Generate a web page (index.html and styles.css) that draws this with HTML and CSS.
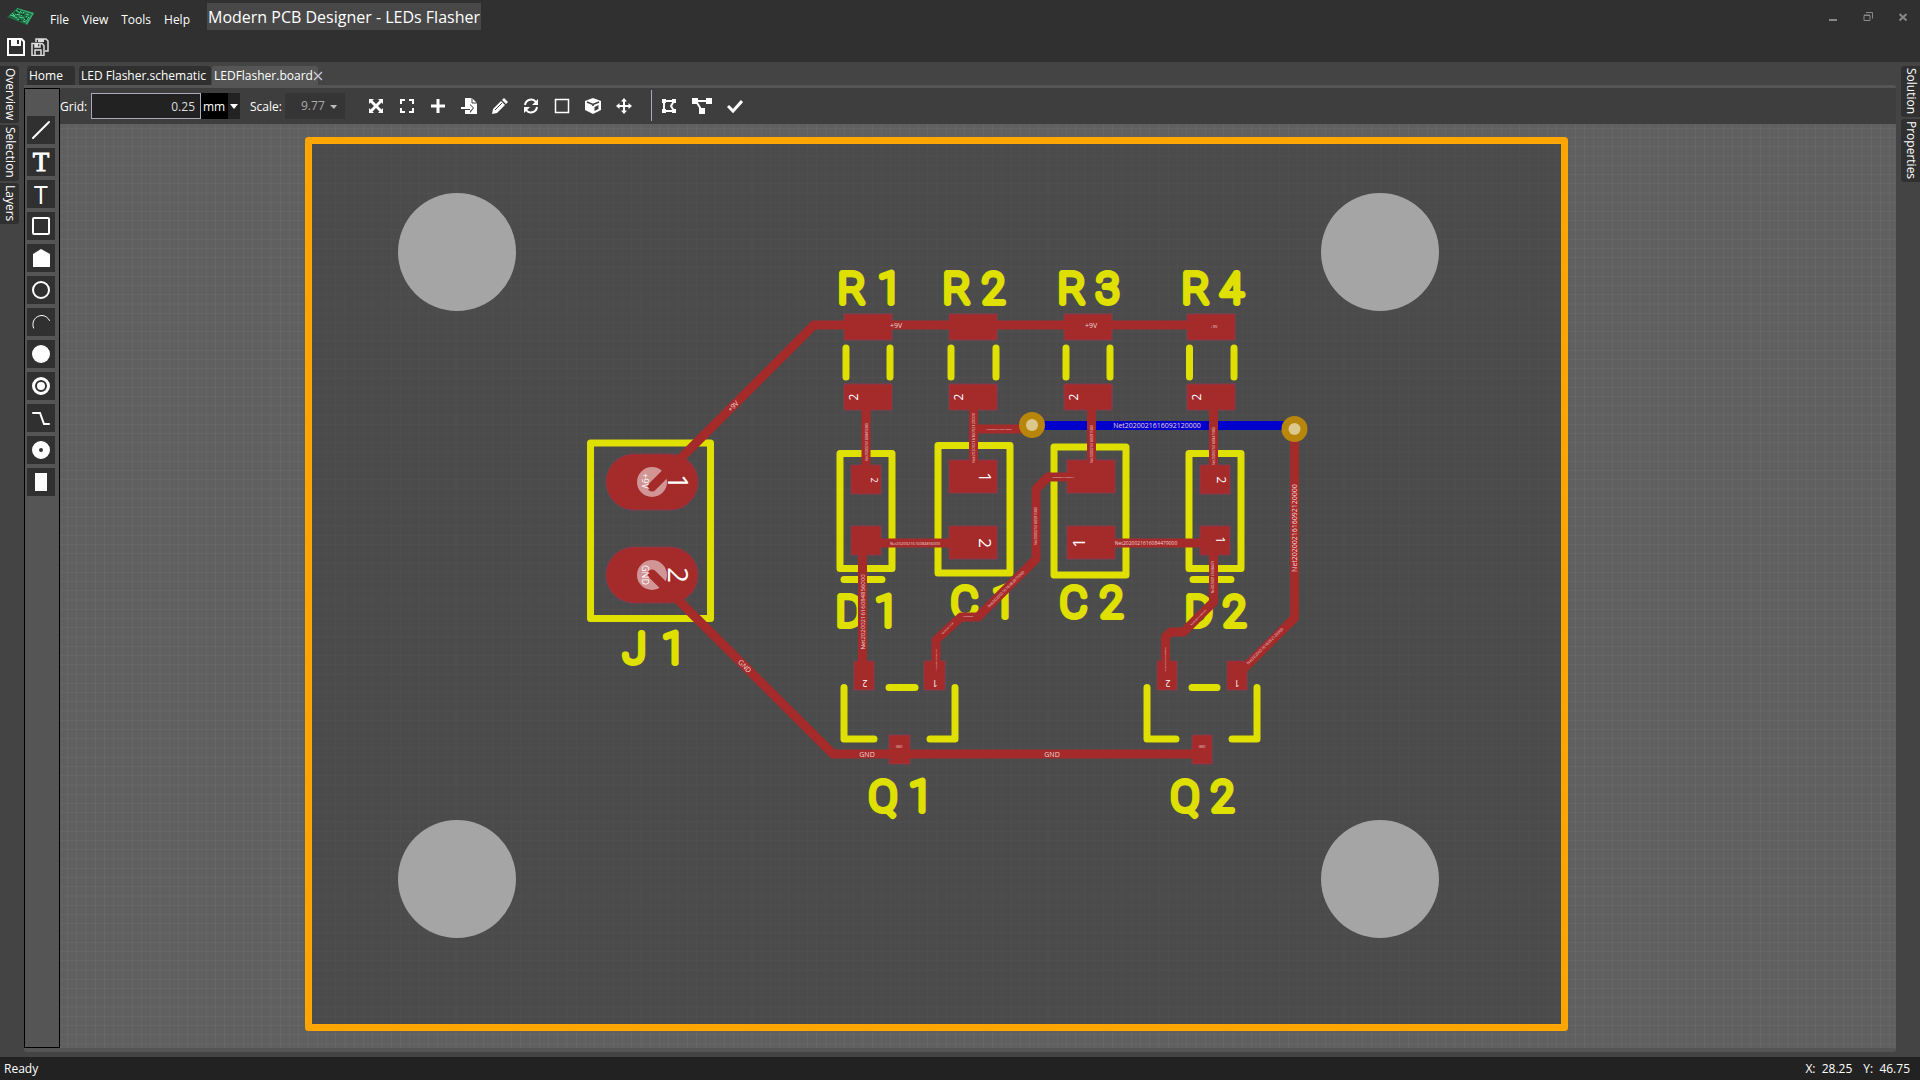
FILE: index.html
```html
<!DOCTYPE html>
<html lang="en">
<head>
<meta charset="utf-8">
<title>Modern PCB Designer - LEDs Flasher</title>
<link rel="stylesheet" href="styles.css">
</head>
<body>
<div class="app">
  <header class="titlebar">
    <div class="titlebar-row">
      <svg class="logo" viewBox="0 0 28 18" aria-hidden="true">
        <path d="M10 0 27 5 20 17 0 9Z" fill="#1f6b45"/>
        <path d="M10 0 27 5 20 17 19 15 25 6 10 1Z" fill="#35b070"/>
        <path d="M3 7l5 1M5 5l3 3M9 2l4 3M8 6l5 1M13 3l3 4M17 4l-3 4M12 9l5 1M10 11l4 2M19 6l3 1M20 8l-3 4M16 13l3 1M6 8l4 2M22 9l-3 4" stroke="#4fd08a" stroke-width="1" fill="none"/>
        <path d="M11 2l2 1M8 4l2 2M14 6l3 1M18 10l2 1M12 12l2 1" stroke="#0d3d27" stroke-width="1.5"/>
      </svg>
      <nav class="menu">
        <button>File</button><button>View</button><button>Tools</button><button>Help</button>
      </nav>
      <h1 class="title">Modern PCB Designer - LEDs Flasher</h1>
      <div class="window-buttons">
        <button aria-label="Minimize"><svg viewBox="0 0 10 10"><path d="M1 8h8" stroke-width="2"/></svg></button>
        <button aria-label="Restore"><svg viewBox="0 0 10 10"><path d="M1 3.5h6v5H1zM1 3h6M3 .5h6.500v6" /></svg></button>
        <button aria-label="Close"><svg viewBox="0 0 10 10"><path d="M1.500 2l7 6.500M8.500 2l-7 6.500" stroke-width="2"/></svg></button>
      </div>
    </div>
    <div class="quickbar">
      <button aria-label="Save"><svg viewBox="0 0 18 18"><path fill="#fff" fill-rule="evenodd" d="M0 0h15l3 3v15H0zM2 2v14h14V4l-2-2v6H4V2z"/><path fill="#fff" d="M5 1h8v6H5z"/><path fill="#303030" d="M10 2h2v4h-2z"/></svg></button>
      <button aria-label="Save all"><svg viewBox="0 0 18 18"><path fill="none" stroke="#ddd" stroke-width="1.500" d="M5 4V1h10l2 2v10h-3"/><path fill="#ddd" d="M7 1h6v3H7z"/><path fill="none" stroke="#ddd" stroke-width="1.500" d="M1 5.500h10l2 2v10H1zM4 17v-5h6v5M4 6v3h5V6"/><path fill="#ddd" d="M4 6h3v3H4z"/></svg></button>
    </div>
  </header>

  <main class="workspace">
    <aside class="dock dock-left">
      <button>Overview</button><button>Selection</button><button>Layers</button>
    </aside>

    <section class="editor">
      <div class="tabs" role="tablist">
        <button class="tab tab-home" role="tab">Home</button>
        <button class="tab tab-schematic" role="tab">LED Flasher.schematic</button>
        <button class="tab tab-board active" role="tab" aria-selected="true">LEDFlasher.board<svg viewBox="0 0 10 10"><path d="M1 1l8 8M9 1l-8 8" stroke="#ccd" stroke-width="1.300"/></svg></button>
      </div>
      <div class="document">
        <div class="tools" role="toolbar" aria-label="Drawing tools">
          <button aria-label="Line"><svg viewBox="0 0 28 28"><path class="s2" d="M6 22 22 6"/></svg></button>
          <button aria-label="Text" class="serif">T</button>
          <button aria-label="Mono text" class="sans">T</button>
          <button aria-label="Rectangle"><svg viewBox="0 0 28 28"><rect class="s2" x="6" y="6" width="16" height="16" rx="1"/></svg></button>
          <button aria-label="Polygon"><svg viewBox="0 0 28 28"><path class="f" d="M6 10l8-5 9 5v13H6z"/></svg></button>
          <button aria-label="Circle"><svg viewBox="0 0 28 28"><circle class="s2" cx="14" cy="14" r="8"/></svg></button>
          <button aria-label="Arc"><svg viewBox="0 0 28 28"><path class="s1" d="M6.500 20C4 13 9 7.500 15 7.500c3 0 6 2 7.500 5"/></svg></button>
          <button aria-label="Hole"><svg viewBox="0 0 28 28"><circle class="f" cx="14" cy="14" r="9"/></svg></button>
          <button aria-label="Via"><svg viewBox="0 0 28 28"><circle class="s3" cx="14" cy="14" r="7.500"/><circle class="f" cx="14" cy="14" r="4"/></svg></button>
          <button aria-label="Track"><svg viewBox="0 0 28 28"><path class="s2" d="M6 9h7l4 11h5"/></svg></button>
          <button aria-label="Pad"><svg viewBox="0 0 28 28"><circle cx="14" cy="14" r="5.500" fill="none" stroke="#fff" stroke-width="7"/></svg></button>
          <button aria-label="SMD pad"><svg viewBox="0 0 28 28"><path class="f" d="M8 5h12v18H8z"/></svg></button>
        </div>
        <div class="board-view">
          <div class="toolbar">
            <label for="grid">Grid:</label>
            <input id="grid" class="grid-size" type="text" value="0.25">
            <span class="unit"><select aria-label="Unit"><option>mm</option></select><svg viewBox="0 0 12 26"><path d="M2 11h8l-4 5z" fill="#fff"/></svg></span>
            <label for="scale" class="scale-label">Scale:</label>
            <span class="scale"><select id="scale"><option>9.77</option></select><svg viewBox="0 0 12 26"><path d="M2 12h7l-3 4z" fill="#bbb"/></svg></span>
            <div class="actions">
              <button aria-label="Fit"><svg viewBox="0 0 16 16"><path class="f" d="M1 1h5L4.500 2.500 8 6l3.500-3.500L10 1h5v5l-1.500-1.500L10 8l3.500 3.500L15 10v5h-5l1.500-1.500L8 10l-3.500 3.500L6 15H1v-5l1.500 1.500L6 8 2.500 4.500 1 6z"/></svg></button>
              <button aria-label="Zoom area"><svg viewBox="0 0 16 16"><path d="M2 6V2h4M10 2h4v4M14 10v4h-4M6 14H2v-4" fill="none" stroke="#fff" stroke-width="2"/></svg></button>
              <button aria-label="Add"><svg viewBox="0 0 16 16"><path d="M8 1v14M1 8h14" stroke="#fff" stroke-width="3"/></svg></button>
              <button aria-label="Import"><svg viewBox="0 0 16 16"><path class="f" d="M4 0h7l5 5v11H4v-4h5v3l4-5-4-4v3H4z"/><path class="f" d="M0 9h9V7l3 3-3 3v-2H0z"/><path d="M11 0v5h5" fill="none" stroke="#3e3e3e"/></svg></button>
              <button aria-label="Edit"><svg viewBox="0 0 16 16"><path class="f" d="M12 0l4 4-2 2-4-4zM9 3l4 4-8 8-5 1 1-5z"/><path d="M3 12l7-7" stroke="#3e3e3e"/></svg></button>
              <button aria-label="Refresh"><svg viewBox="0 0 16 16"><path d="M2 7c1-6 8-7 11-3M14 9c-1 6-8 7-11 3" fill="none" stroke="#fff" stroke-width="2"/><path class="f" d="M15 1v6H9zM1 15V9h6z"/></svg></button>
              <button aria-label="Outline"><svg viewBox="0 0 16 16"><path d="M1.500 1.500h13v13h-13z" fill="none" stroke="#fff" stroke-width="1.500"/></svg></button>
              <button aria-label="3D view"><svg viewBox="0 0 16 16"><path class="f" d="M8 0l8 3v9l-8 4-8-4V3z"/><path d="M2 4l6 2.500L14 4M8 6.500V8" fill="none" stroke="#3e3e3e" stroke-width="1.500"/><path d="M9.500 9l4-2v4l-4 2z" fill="#3e3e3e"/></svg></button>
              <button aria-label="Move"><svg viewBox="0 0 16 16"><path class="f" d="M8 0l3 3.500H9V7h3.500V5L16 8l-3.500 3V9H9v3.500h2L8 16l-3-3.500h2V9H3.500v2L0 8l3.500-3v2H7V3.500H5z"/></svg></button>
            </div>
            <div class="actions checks">
              <button aria-label="Repour polygons"><svg viewBox="0 0 16 16"><path d="M3 3h10L10 8l3 5H3z" fill="none" stroke="#fff" stroke-width="2"/><path class="f" d="M1 1h4v4H1zM11 1h4v4h-4zM1 11h4v4H1zM11 11h4v4h-4z"/></svg></button>
              <button aria-label="Nets"><svg viewBox="0 0 20 16" class="wide"><path d="M3 3h14M4 3l6 10" stroke="#fff" stroke-width="2"/><path class="f" d="M0 0h6v6H0zM14 0h6v6h-6zM7 10h6v6H7z"/></svg></button>
              <button aria-label="Check"><svg viewBox="0 0 16 16"><path d="M1 8l5 5 9-10" fill="none" stroke="#fff" stroke-width="3"/></svg></button>
            </div>
          </div>
          <svg class="canvas" viewBox="60 124 1836 924" role="img" aria-label="LED flasher board layout">
            <defs>
              <pattern id="mesh" x="58" y="124" width="37" height="37" patternUnits="userSpaceOnUse">
                <path d="M.5 0v37M9.500 0v37M18.500 0v37M28 0v37M0 4.500h37M0 13.500h37M0 22.500h37M0 32h37" stroke="#fff" stroke-opacity=".04"/>
              </pattern>
            </defs>
            <rect x="-1000" y="-1000" width="4000" height="3000" fill="url(#mesh)"/>
            <rect x="308" y="140" width="1257" height="887" fill="#484848" fill-opacity=".85"/>
            <rect x="308" y="140" width="1257" height="887" fill="url(#mesh)" fill-opacity=".3"/>
            <rect x="308.500" y="140.500" width="1256" height="887" fill="none" stroke="#ffa500" stroke-width="7" stroke-linejoin="round"/>
            <g fill="#a5a5a5"><circle cx="457" cy="252" r="59"/><circle cx="1380" cy="252" r="59"/><circle cx="457" cy="879" r="59"/><circle cx="1380" cy="879" r="59"/></g>

            <path d="M1032 425.500H1294" stroke="#0000cd" stroke-width="9"/>
            <g class="silk">
              <path d="M590.500 443h120v175.500h-120z"/>
              <path d="M846 348v29M890 348v29M951 348v29M996 348v29M1066 348v29M1110 348v29M1189.500 348v29M1234 348v29"/>
              <path d="M840 453.500h52v115h-52zM844 579.500h38M1189 453.500h52v115h-52zM1193 579.500h38"/>
              <path d="M938 445.500h72v127.500h-72zM1054 447h72v128h-72z"/>
              <path d="M844 687.500v51.500h30M955 687.500v51.500h-25M889 687.500h26M1147 687.500v51.500h29M1257 687.500v51.500h-25M1192 687.500h25"/>
            </g>
            <g class="names">
              <text x="838 878" y="303">R1</text><text x="943 982" y="303">R2</text><text x="1058 1096" y="303">R3</text><text x="1182 1220" y="303">R4</text>
              <text x="836 875" y="626">D1</text><text x="1185 1223" y="626">D2</text>
              <text x="951 992" y="617">C1</text><text x="1060 1100" y="617">C2</text>
              <text x="869 909" y="811">Q1</text><text x="1171 1211" y="811">Q2</text>
              <text x="623 662" y="663">J1</text>
            </g>

            <g class="pads">
              <rect x="606" y="454" width="92" height="56" rx="28"/><rect x="606" y="547" width="92" height="56" rx="28"/>
              <path d="M844 314h48v26h-48zM844 384h48v26h-48zM949 314h48v26h-48zM949 384h48v26h-48zM1064 314h48v26h-48zM1064 384h48v26h-48zM1187 314h48v26h-48zM1187 384h48v26h-48z"/>
              <path d="M851 465h30v29h-30zM851 526h30v29h-30zM1200 465h30v29h-30zM1200 526h30v29h-30zM949 460h48v33h-48zM949 526h48v33h-48zM1067 460h48v33h-48zM1067 526h48v33h-48z"/>
              <path d="M854 661h20v29h-20zM924 661h21v29h-21zM889 735h21v29h-21zM1157 661h20v29h-20zM1227 661h20v29h-20zM1192 735h20v29h-20z"/>
            </g>
            <g fill="#d29595"><circle cx="652" cy="482" r="15"/><circle cx="652" cy="575" r="15"/></g>
            <g class="tracks">
              <path d="M652 487 814 325H1211M652 574 833 754H1202"/>
              <path d="M866 400v80M862.500 545v125M866 543H970M973.500 400v70M973.500 429H1032M1091.500 400v70M1213.500 400v75M1100 543h110"/>
              <path d="M1085 477h-37l-12 12v70l-58 58h-17l-25 23v27"/>
              <path d="M1213.500 550v52l-30 30h-13l-5 5v30M1294.500 429v189l-57 57"/>
            </g>
            <g fill="#b8860b"><circle cx="1032" cy="425" r="13"/><circle cx="1294.500" cy="429" r="13"/></g>
            <g fill="#dcc88c"><circle cx="1032" cy="425" r="6"/><circle cx="1294.500" cy="429" r="6"/></g>

            <g class="nets">
              <text class="n7" x="1157" y="428">Net2020021616092120000</text>
              <text class="n7" transform="translate(1297 528) rotate(-90)">Net2020021616092120000</text>
              <text class="n6" transform="translate(865 612) rotate(-90)">Net2020021616084856000</text>
              <text class="n4" x="915" y="545">Net2020021616084856000</text>
              <text class="n5" x="1146" y="545">Net2020021616084479000</text>
              <text class="n3" transform="translate(868 442) rotate(-90)">Net2020021616084856000</text>
              <text class="n4" transform="translate(975 438) rotate(-90)">Net2020021616092120000</text>
              <text class="n2" x="999" y="430">Net2020021616092120000</text>
              <text class="n3" transform="translate(1093 444) rotate(-90)">Net2020021616082815000</text>
              <text class="n3" transform="translate(1215 446) rotate(-90)">Net2020021616084479000</text>
              <text class="n3" transform="translate(1037 526) rotate(-90)">Net2020021616082815000</text>
              <text class="n4" transform="translate(1007 590) rotate(-45)">Net2020021616082815000</text>
              <text class="n4" transform="translate(1266 647) rotate(-45)">Net2020021616092120000</text>
              <text class="n3" transform="translate(1214 577) rotate(-90)">Net2020021616084479</text>
              <text class="n2" transform="translate(1199 618) rotate(-45)">Net2020021616084479</text>
              <text class="n2" transform="translate(948 629) rotate(-45)">Net20200216160</text>
              <text class="n2" transform="translate(937 660) rotate(-90)">Net2020021616082815</text>
              <text class="n2" transform="translate(1166 660) rotate(-90)">Net2020021616084479000</text>
              <text class="n2" x="1063" y="478">Net2020021616082815</text>
              <text class="n2" x="968" y="617">Net202002</text>
              <text class="n7" x="896" y="328">+9V</text><text class="n7" x="1091" y="328">+9V</text><text class="n4" x="1214" y="328">+9V</text>
              <text class="n7" transform="translate(735 408) rotate(-45)">+9V</text>
              <text class="n7" transform="translate(743 668) rotate(45)">GND</text>
              <text class="n7" x="867" y="757">GND</text><text class="n7" x="1052" y="757">GND</text>
              <text class="n3" x="899" y="748">GND</text><text class="n3" x="1202" y="748">GND</text>
            </g>
            <g class="pins">
              <text class="p9" transform="translate(642 481) rotate(90)">+9V</text>
              <text class="p9" transform="translate(642 575) rotate(90)">GND</text>
              <text class="p28" transform="translate(668 482) rotate(90)">1</text>
              <text class="p28" transform="translate(668 575) rotate(90)">2</text>
              <text class="p17" transform="translate(979 477) rotate(90)">1</text>
              <text class="p17" transform="translate(979 543) rotate(90)">2</text>
              <text class="p17" transform="translate(1085 543) rotate(-90)">1</text>
              <text class="p12" transform="translate(858 397) rotate(-90)">2</text>
              <text class="p12" transform="translate(963 397) rotate(-90)">2</text>
              <text class="p12" transform="translate(1078 397) rotate(-90)">2</text>
              <text class="p12" transform="translate(1201 397) rotate(-90)">2</text>
              <text class="p12" transform="translate(1217 480) rotate(90)">2</text>
              <text class="p12" transform="translate(1216 540) rotate(90)">1</text>
              <text class="p9" transform="translate(871 480) rotate(90)">2</text>
              <text class="p9" transform="translate(865 680) rotate(180)">2</text>
              <text class="p9" transform="translate(935 680) rotate(180)">1</text>
              <text class="p9" transform="translate(1168 680) rotate(180)">2</text>
              <text class="p9" transform="translate(1237 680) rotate(180)">1</text>
            </g>
          </svg>
        </div>
      </div>
    </section>

    <aside class="dock dock-right">
      <button>Solution</button><button>Properties</button>
    </aside>
  </main>

  <footer class="status"><span>Ready</span><span class="coords"><span>X:&nbsp; 28.25</span><span>Y:&nbsp; 46.75</span></span></footer>
</div>
</body>
</html>
```
FILE: styles.css
```css
* { box-sizing: border-box; }
body { margin: 0; background: #444; color: #fff; font: 12px/16px "Open Sans", "Noto Sans", sans-serif; }
button { margin: 0; padding: 0; border: 0; background: none; color: inherit; font: inherit; }
button svg { display: block; }
.app { display: flex; flex-direction: column; height: 100vh; }

.titlebar { background: #303030; height: 62px; flex: none; }
.titlebar-row { display: flex; align-items: flex-start; height: 36px; padding-left: 7px; }
.logo { width: 28px; height: 18px; margin-top: 8px; }
.menu { display: flex; gap: 13px; padding: 12px 0 0 15px; width: 172px; flex: none; }
.title { margin: 3px 0 0; width: 274px; height: 27px; background: #484848; font-size: 16px; line-height: 28px; font-weight: 400; text-align: center; white-space: nowrap; }
.window-buttons { margin-left: auto; display: flex; gap: 25px; padding: 12px 12px 0 0; }
.window-buttons svg { width: 10px; height: 10px; fill: none; stroke: #888; }
.quickbar { display: flex; gap: 6px; padding: 2px 7px; }
.quickbar svg { width: 18px; height: 18px; }

.workspace { flex: 1; min-height: 0; display: flex; gap: 5px; padding: 4px 0 5px; }
.dock { display: flex; flex-direction: column; gap: 2px; width: 19px; flex: none; }
.dock button { writing-mode: vertical-rl; width: 19px; padding: 2px 0 3px; background: #303030; text-align: left; }
.dock-left button { border-radius: 0 3px 3px 0; }
.dock-right button { border-radius: 3px 0 0 3px; }

.editor { flex: 1; min-width: 0; display: flex; flex-direction: column; }
.tabs { display: flex; height: 19px; padding-left: 3px; flex: none; }
.tab { display: flex; align-items: center; gap: 3px; padding: 0 2px; background: #303030; border-radius: 3px 3px 0 0; text-align: left; white-space: nowrap; }
.tab-home { width: 48px; margin-right: 4px; }
.tab-schematic { width: 132px; margin-right: 1px; }
.tab-board { width: 106px; justify-content: space-between; gap: 0; }
.tab.active { background: #555; }
.tab svg { width: 10px; height: 10px; flex: none; }
.document { flex: 1; min-height: 0; display: flex; border: solid #555; border-width: 3px 0 4px; border-radius: 0 3px 3px 3px; background: #555; }

.tools { width: 36px; flex: none; display: flex; flex-direction: column; align-items: center; gap: 4px; padding-top: 27px; padding-right: 2px; border: 1px solid #000; }
.tools button { width: 28px; height: 28px; flex: none; background: #303030; text-align: center; }
.tools .serif { font: 27px/28px "Liberation Serif", serif; -webkit-text-stroke: 1px #fff; }
.tools .sans { font: 25px/28px "Open Sans", sans-serif; }
.f { fill: #fff; }
.s1, .s2, .s3 { fill: none; stroke: #fff; stroke-width: 1; stroke-linecap: round; }
.s2 { stroke-width: 2; }
.s3 { stroke-width: 3; }

.board-view { flex: 1; min-width: 0; display: flex; flex-direction: column; }
.toolbar { display: flex; align-items: center; height: 36px; flex: none; padding-bottom: 1px; background: #3e3e3e; white-space: nowrap; }
.toolbar label { width: 31px; padding-top: 2px; }
.grid-size { width: 110px; height: 26px; padding: 2px 5px 0; border: 1px solid #aab; background: #222; color: #ddd; font: inherit; text-align: right; border-radius: 0; }
.unit, .scale { display: flex; height: 26px; }
.unit svg, .scale svg { width: 12px; height: 26px; background: #222; }
select { appearance: none; border: 0; border-radius: 0; padding: 0 3px; font: inherit; }
.unit select { width: 27px; background: #000; color: #fff; padding: 2px 2px 0; }
.toolbar .scale-label { width: 35px; margin-left: 10px; }
.toolbar .scale { width: 60px; background: #353535; margin-right: 15px; }
.scale select { width: 43px; padding: 0 0 0 16px; background: #353535; color: #aaa; }
.toolbar .scale svg { background: none; }
.actions { display: flex; }
.actions button { width: 31px; height: 16px; display: flex; justify-content: center; }
.actions svg { width: 16px; height: 16px; }
.actions .wide { width: 20px; }
.checks { height: 31px; align-items: center; margin-left: 12px; border-left: 1px solid #aab; }
.checks button { width: 33px; }
.canvas { display: block; flex: 1; min-height: 0; width: 100%; background: #606060; }

.silk { fill: none; stroke: #e0e000; stroke-width: 7; stroke-linecap: round; stroke-linejoin: round; }
.names { font: 100 42px "Roboto", sans-serif; fill: #e0e000; stroke: #e0e000; stroke-width: 6; stroke-linejoin: round; }
.pads { fill: #a52a2a; stroke: #8a3a50; stroke-width: 1; }
.tracks { fill: none; stroke: #a52a2a; stroke-width: 9; stroke-linecap: round; stroke-linejoin: round; }
.nets, .pins { fill: #fff; text-anchor: middle; }
.nets { fill: #eed5d5; }
.n2 { font-size: 2px; }
.n3 { font-size: 3px; }
.n4 { font-size: 4px; }
.n5 { font-size: 5px; }
.n6 { font-size: 6px; }
.n7 { font-size: 7px; }
.p9 { font-size: 9px; }
.p12 { font-size: 12px; }
.p17 { font-size: 17px; }
.p28 { font-size: 28px; }

.status { flex: none; height: 23px; padding: 0 10px 0 4px; display: flex; justify-content: space-between; line-height: 24px; background: #222; }
.coords { display: flex; gap: 11px; }
```
